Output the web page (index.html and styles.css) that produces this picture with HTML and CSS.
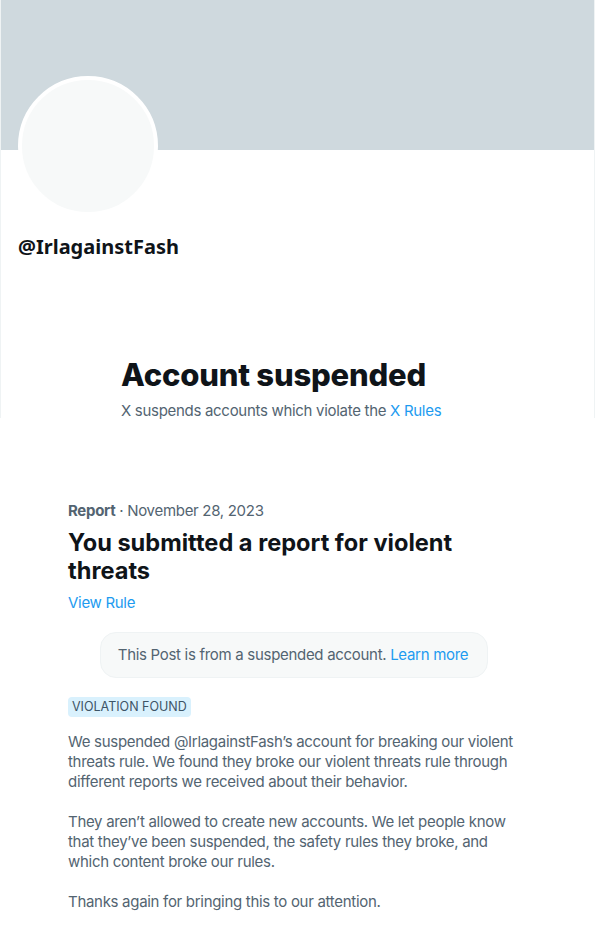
FILE: index.html
```html
<!DOCTYPE html>
<html lang="en">
<head>
<meta charset="utf-8">
<title>Account suspended</title>
<link rel="stylesheet" href="styles.css">
</head>
<body>
<section class="profile">
  <div class="banner"></div>
  <div class="avatar"></div>
  <div class="handle">@IrlagainstFash</div>
  <div class="suspended">
    <h1 class="suspended-title">Account suspended</h1>
    <p class="suspended-text">X suspends accounts which violate the <a class="link" href="#">X Rules</a></p>
  </div>
</section>
<section class="report">
  <div class="report-meta"><b>Report</b> · November 28, 2023</div>
  <h2 class="report-title">You submitted a report for violent threats</h2>
  <a class="link view-rule" href="#">View Rule</a>
  <div class="notice-wrap">
    <div class="notice">This Post is from a suspended account. <a class="link" href="#">Learn more</a></div>
  </div>
  <span class="badge">VIOLATION FOUND</span>
  <p class="body">We suspended @IrlagainstFash’s account for breaking our violent threats rule. We found they broke our violent threats rule through different reports we received about their behavior.</p>
  <p class="body">They aren’t allowed to create new accounts. We let people know that they’ve been suspended, the safety rules they broke, and which content broke our rules.</p>
  <p class="body">Thanks again for bringing this to our attention.</p>
</section>
</body>
</html>
```
FILE: styles.css
```css
* { box-sizing: border-box; }
html, body { margin: 0; padding: 0; background: #fff; }
body { font-family: Inter, "Liberation Sans", sans-serif; color: #0f1419; }

.profile {
  width: 595px;
  height: 418px;
  border-left: 1px solid #eff3f4;
  border-right: 1px solid #eff3f4;
}
.banner { height: 150px; background: #cfd9de; }
.avatar {
  width: 140px;
  height: 140px;
  margin: -74px 0 0 17px;
  border-radius: 50%;
  background: #f7f9f9;
  border: 4px solid #fff;
}
.handle {
  margin: 19px 0 0 17px;
  font-family: "Noto Sans", sans-serif;
  font-weight: 700;
  font-size: 20px;
  line-height: 24px;
  color: #0f1419;
}
.suspended { margin: 98px 0 0 120px; }
.suspended-title {
  margin: 0;
  font-size: 31px;
  line-height: 36px;
  font-weight: 800;
  letter-spacing: -0.2px;
}
.suspended-text {
  margin: 8px 0 0;
  font-size: 15px;
  line-height: 20px;
  color: #536471;
  letter-spacing: -0.3px;
}
.link { color: #1d9bf0; text-decoration: none; }

.report { width: 452px; margin: 83px 0 0 68px; }
.report-meta { font-size: 15px; line-height: 20px; color: #536471; letter-spacing: -0.3px; }
.report-meta b { font-weight: 700; }
.report-title {
  margin: 8px 0 0;
  font-size: 23.6px;
  line-height: 28px;
  font-weight: 700;
}
.view-rule { display: block; margin-top: 8px; font-size: 15px; line-height: 20px; letter-spacing: -0.3px; }
.notice-wrap { display: flex; justify-content: center; margin-top: 19px; }
.notice {
  padding: 12px 19px 12px 17px;
  background: #f7f9f9;
  border: 1px solid #eff3f4;
  border-radius: 16px;
  font-size: 15px;
  line-height: 20px;
  color: #536471;
  letter-spacing: -0.3px;
}
.badge {
  display: inline-block;
  margin-top: 19px;
  padding: 0 4px;
  background: #d9f1fd;
  border-radius: 4px;
  font-size: 12.5px;
  line-height: 20px;
  color: #3d5466;
}
.body {
  margin: 15px 0 20px;
  font-size: 15px;
  line-height: 20px;
  color: #536471;
  letter-spacing: -0.3px;
}
.body + .body { margin-top: 20px; }
```
